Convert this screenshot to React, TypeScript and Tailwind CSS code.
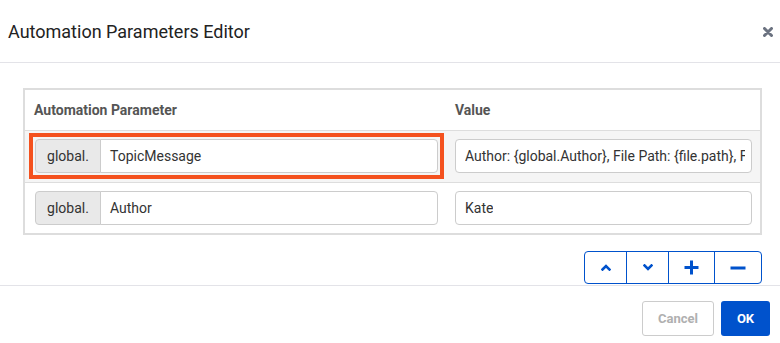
import React from "react";

function Chevron({ up }: { up?: boolean }) {
  return (
    <svg width="10" height="7" viewBox="0 0 10 7">
      <path
        d={up ? "M1.5 5.5 L5 2 L8.5 5.5" : "M1.5 1.5 L5 5 L8.5 1.5"}
        fill="none"
        stroke="#0052cc"
        strokeWidth="2.6"
        strokeLinecap="square"
      />
    </svg>
  );
}

function InputGroup({ value, highlight }: { value: string; highlight?: boolean }) {
  return (
    <div className="relative flex h-[34px]">
      <div className="flex w-[66px] items-center justify-center rounded-l-[4px] border border-[#cccccc] bg-[#e9e9e9] text-[14px] text-[#333]">
        global.
      </div>
      <div className="-ml-px flex flex-1 items-center rounded-r-[4px] border border-[#cccccc] bg-white pl-[9px] text-[14px] text-[#333]">
        {value}
      </div>
      {highlight && (
        <div className="pointer-events-none absolute -bottom-[6px] -left-[6px] -right-[6px] -top-[6px] border-[4px] border-[#f4511e]" />
      )}
    </div>
  );
}

function ValueInput({ value }: { value: string }) {
  return (
    <div className="flex h-[34px] min-w-0 items-center rounded-[4px] border border-[#cccccc] bg-white pl-[9px] pr-[6px] text-[14px] text-[#333]">
      <span className="min-w-0 overflow-hidden whitespace-nowrap">{value}</span>
    </div>
  );
}

export default function App() {
  return (
    <div
      className="h-[343px] w-[780px] overflow-hidden bg-white"
      style={{ fontFamily: "Roboto, 'Liberation Sans', sans-serif" }}
    >
      <div className="flex h-[63px] items-center justify-between border-b border-[#e3e3e8] pl-[8px] pr-[7px]">
        <div className="text-[18px] text-[#222]">Automation Parameters Editor</div>
        <svg width="10" height="10" viewBox="0 0 10 10" className="mt-[2px]">
          <path d="M1.5 1.5 L8.5 8.5 M8.5 1.5 L1.5 8.5" stroke="#6b7280" strokeWidth="3" strokeLinecap="round" />
        </svg>
      </div>
      <div className="flex flex-col pl-[23px] pr-[18px] pt-[25px]">
        <div className="border-2 border-[#dddddd]">
          <div className="grid h-[41px] grid-cols-[420px_minmax(0,1fr)] items-center border-b border-[#dddddd] bg-white text-[14px] font-bold text-[#555]">
            <div className="pl-[9px]">Automation Parameter</div>
            <div className="pl-[10px]">Value</div>
          </div>
          <div className="grid grid-cols-[420px_minmax(0,1fr)] border-b border-[#dddddd] bg-[#f5f5f5] pb-[9px] pt-[8px]">
            <div className="pl-[10px] pr-[7px]">
              <InputGroup value="TopicMessage" highlight />
            </div>
            <div className="min-w-0 pl-[10px] pr-[8px]">
              <ValueInput value="Author: {global.Author}, File Path: {file.path}, File Name: {file.name}" />
            </div>
          </div>
          <div className="grid grid-cols-[420px_minmax(0,1fr)] bg-white pb-[8px] pt-[8px]">
            <div className="pl-[10px] pr-[7px]">
              <InputGroup value="Author" />
            </div>
            <div className="min-w-0 pl-[10px] pr-[8px]">
              <ValueInput value="Kate" />
            </div>
          </div>
        </div>
        <div className="mt-[16px] flex justify-end">
          <div className="flex h-[33px] overflow-hidden rounded-[4px] border border-[#0052cc]">
            <div className="flex w-[42px] items-center justify-center border-r border-[#0052cc]">
              <Chevron up />
            </div>
            <div className="flex w-[42px] items-center justify-center border-r border-[#0052cc]">
              <Chevron />
            </div>
            <div className="flex w-[46px] items-center justify-center border-r border-[#0052cc]">
              <svg width="15" height="15" viewBox="0 0 15 15">
                <path d="M7.5 0.5 V14.5 M0.5 7.5 H14.5" stroke="#0052cc" strokeWidth="3" />
              </svg>
            </div>
            <div className="flex w-[46px] items-center justify-center">
              <svg width="16" height="4" viewBox="0 0 16 4">
                <path d="M0.5 2 H15.5" stroke="#0052cc" strokeWidth="3" />
              </svg>
            </div>
          </div>
        </div>
      </div>
      <div className="mt-[1px] flex justify-end gap-[7px] border-t border-[#e3e3e8] pr-[10px] pt-[15px]">
        <div className="flex h-[35px] w-[72px] items-center justify-center rounded-[3px] border border-[#cccccc] text-[13px] font-bold text-[#b0b0b0]">
          Cancel
        </div>
        <div className="flex h-[35px] w-[49px] items-center justify-center rounded-[3px] bg-[#0052cc] text-[13px] font-bold text-white">
          OK
        </div>
      </div>
    </div>
  );
}
